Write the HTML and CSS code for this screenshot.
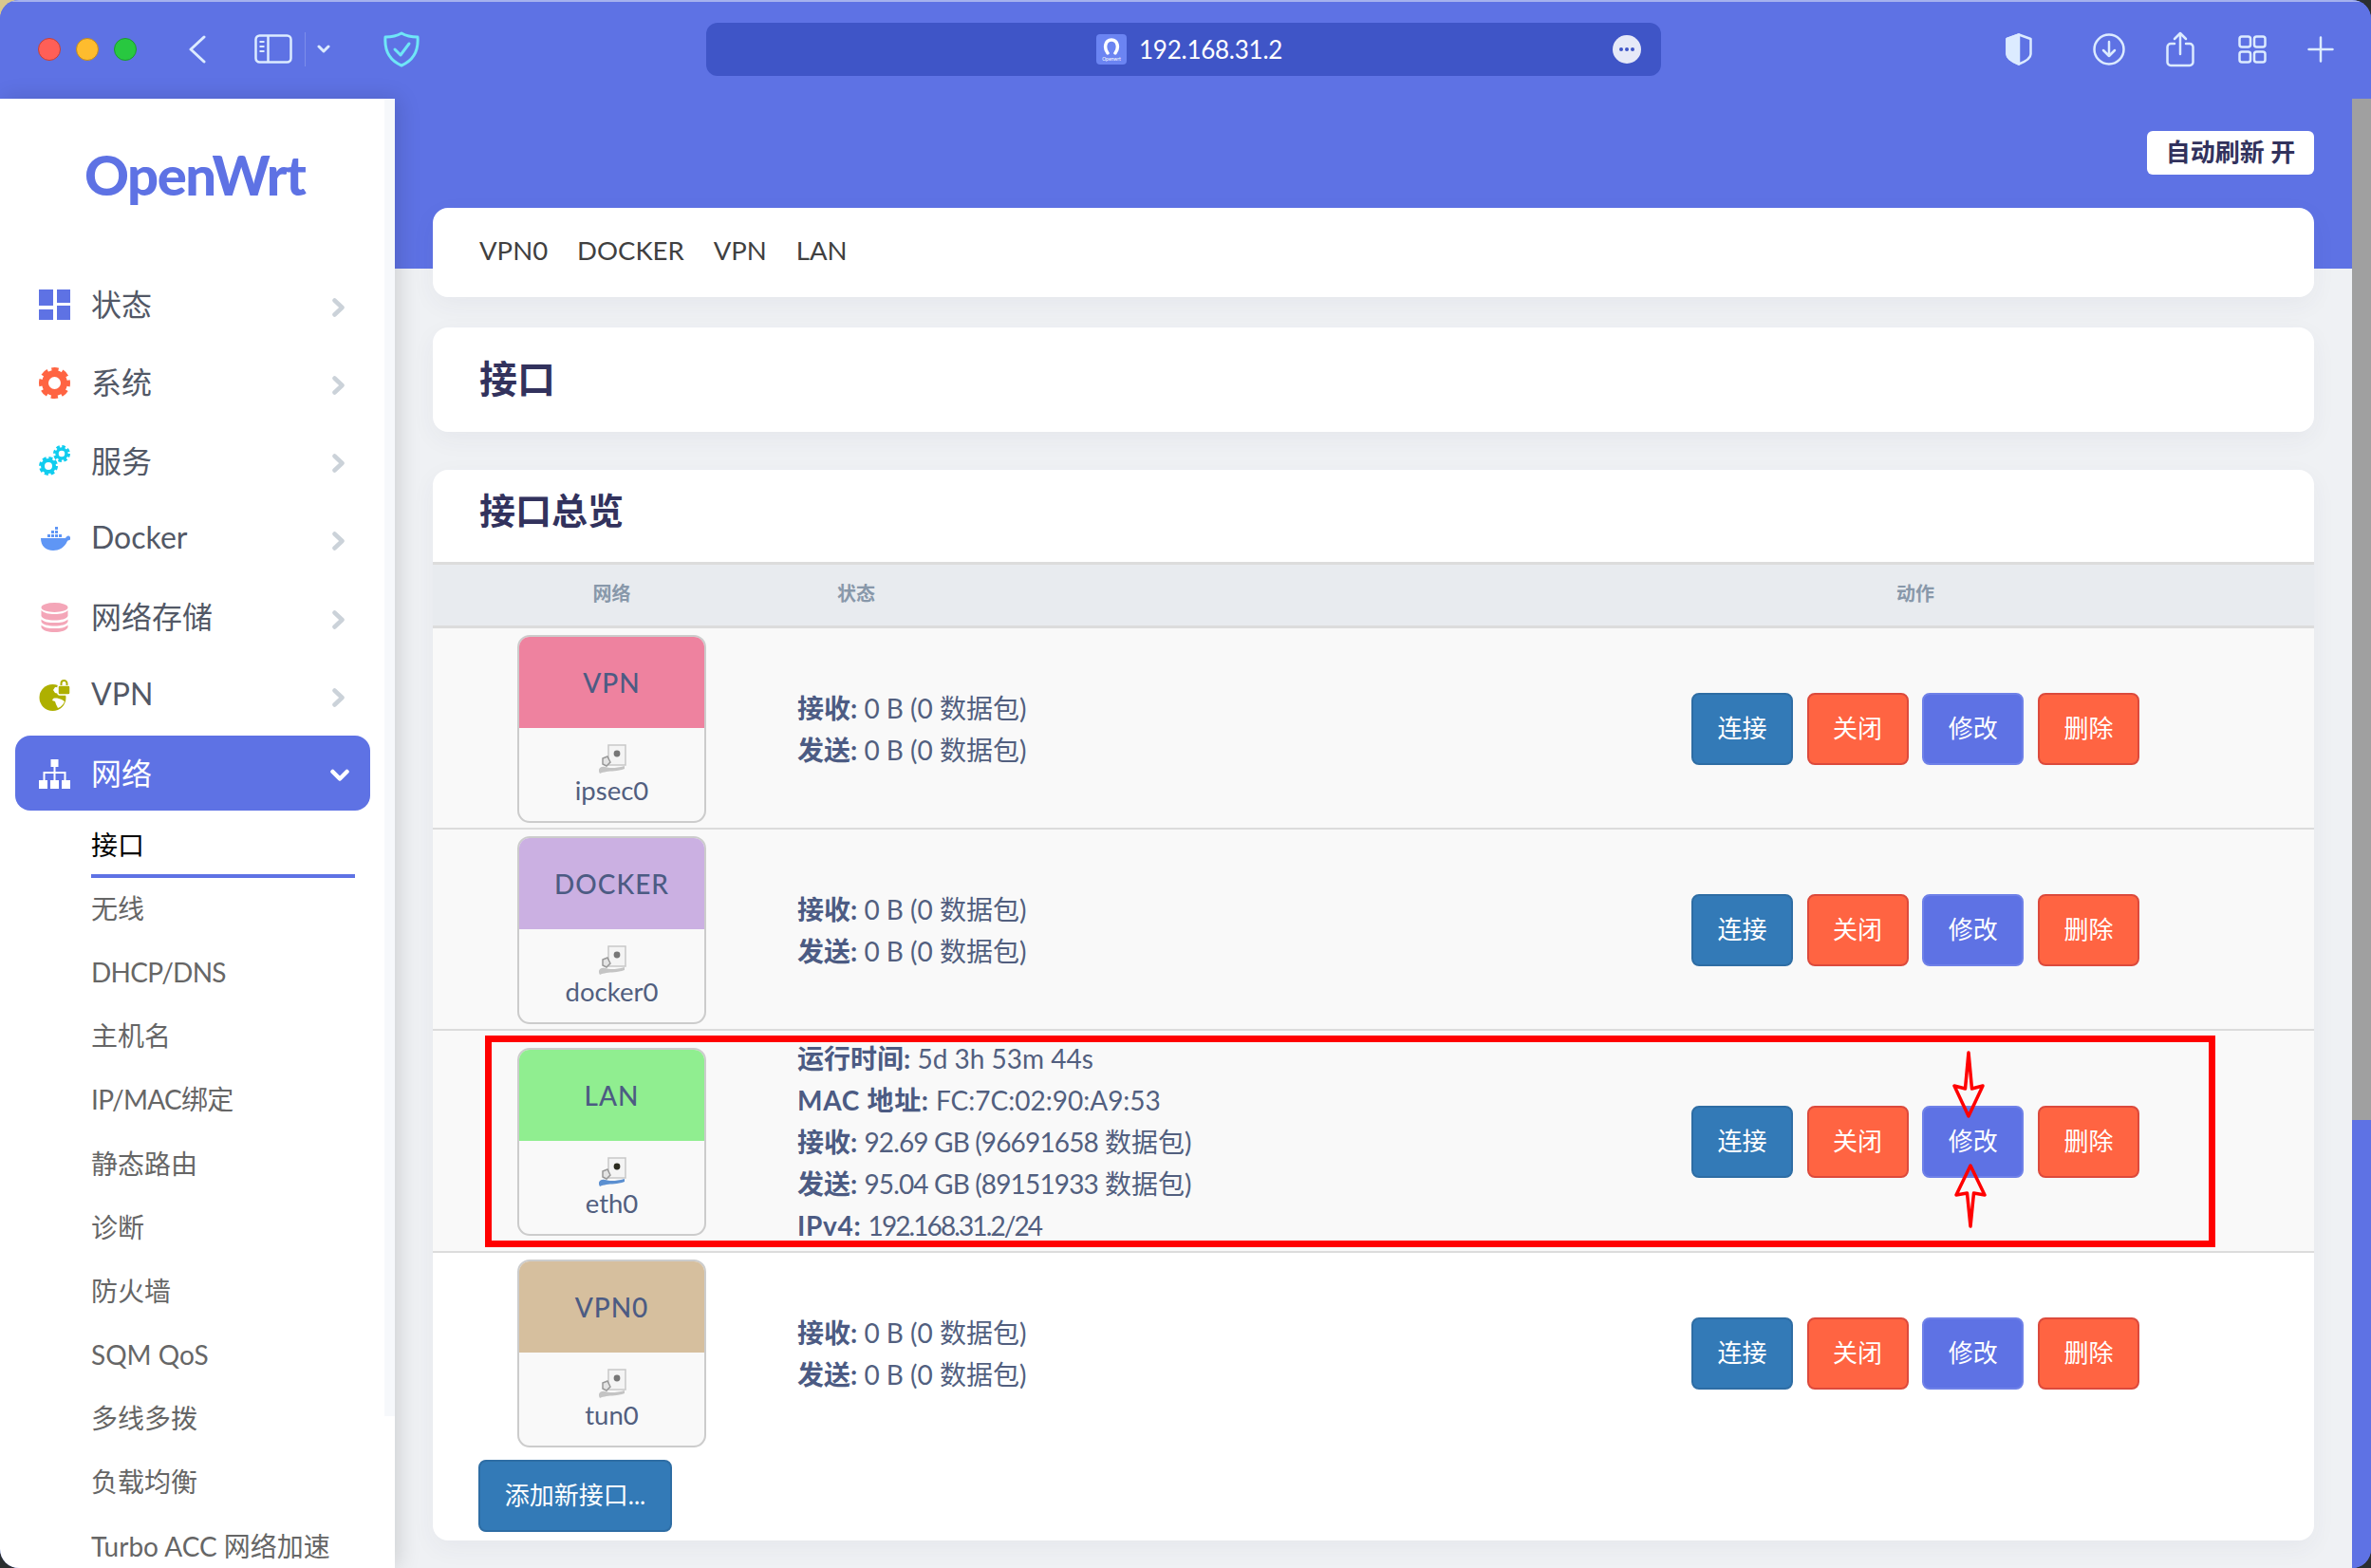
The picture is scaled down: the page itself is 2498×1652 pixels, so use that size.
FILE: index.html
```html
<!DOCTYPE html>
<html>
  <head>
    <title>接口 - OpenWrt</title>
    <link rel="stylesheet" href="styles.css">
  </head>
  <body>
    <svg class="defs" width="0" height="0">
      <symbol id="port" viewBox="0 0 32 32">
        <path d="M12 1h18v21H12z" fill="#f4f4f4" stroke="#c8c8c8" stroke-width="1.5" />
        <circle cx="21" cy="10" r="3.4" fill="currentColor" />
        <path d="M6 15l5-2 3 6-4 4-4-2z" fill="#e4e4e4" stroke="#999" stroke-width="1.5" />
        <path d="M3 31c-3-5 1-8 5-7 5 1 10 2 21-1v3c-8 3-14 2-19 3-3 .5-5 1-7 2z" fill="var(--cable)" />
      </symbol>
      <symbol id="chev" viewBox="0 0 14 20">
        <path d="M2.5 2.5 10.5 10l-8 7.500" fill="none" stroke="currentColor" stroke-width="4.500" stroke-linecap="round" stroke-linejoin="round" />
      </symbol>
    </svg>
    <div class="window">
      <header class="toolbar">
        <div class="lights">
          <span class="light red"></span>
          <span class="light yellow"></span>
          <span class="light green"></span>
        </div>
        <svg class="back" width="18" height="30" viewBox="0 0 18 30" fill="none" stroke="#dcebff" stroke-width="3" stroke-linecap="round" stroke-linejoin="round">
          <path d="M16 2 2 15l14 13" />
        </svg>
        <svg class="side" width="40" height="31" viewBox="0 0 40 31" fill="none" stroke="#dcebff" stroke-width="2.500">
          <rect x="1.500" y="1.500" width="37" height="28" rx="4" />
          <path d="M14.500 1.500v28" />
          <path d="M5.500 8h5M5.500 13h5M5.500 18h5" stroke-width="2" />
        </svg>
        <span class="tool-sep"></span>
        <svg class="side-more" width="14" height="9" viewBox="0 0 14 9" fill="none" stroke="#dcebff" stroke-width="3" stroke-linecap="round" stroke-linejoin="round">
          <path d="M2 2l5 5 5-5" />
        </svg>
        <svg class="guard" width="38" height="38" viewBox="0 0 38 38" fill="none" stroke="#6fe6f7" stroke-width="3" stroke-linecap="round" stroke-linejoin="round">
          <path d="M19 2c5 3 10 4 17 4 1 13-3 24-17 30C5 30 1 19 2 6c7 0 12-1 17-4z" />
          <path d="M12 19l6 6 9-12" />
        </svg>
        <div class="urlbar">
          <span class="favicon">
            <svg width="18" height="20" viewBox="0 0 18 20" fill="none" stroke="#fff" stroke-width="3.500" stroke-linecap="round">
              <path d="M5 17C1 12 2 3 9 3s8 9 4 14" />
            </svg>
            <span class="favicon-text">Openwrt</span>
          </span>
          <span class="url">192.168.31.2</span>
          <span class="url-more"><i></i><i></i><i></i></span>
        </div>
        <div class="tool-right">
          <svg width="28" height="34" viewBox="0 0 28 34" fill="none" stroke="#dcebff" stroke-width="2.500" stroke-linejoin="round">
            <path d="M14 1.500 26.500 6v16c0 4-6 8-12.500 10.500C7.500 30 1.500 26 1.500 22V6z" />
            <path d="M14 1.500V32.500C7.500 30 1.500 26 1.500 22V6z" fill="#dcebff" />
          </svg>
          <svg class="tool-dl" width="34" height="34" viewBox="0 0 34 34" fill="none" stroke="#dcebff" stroke-width="2.500" stroke-linecap="round" stroke-linejoin="round">
            <circle cx="17" cy="17" r="15.500" />
            <path d="M17 9v15M11 18l6 6 6-6" />
          </svg>
          <svg class="tool-share" width="30" height="38" viewBox="0 0 30 38" fill="none" stroke="#dcebff" stroke-width="2.500" stroke-linecap="round" stroke-linejoin="round">
            <path d="M9 13H5a3.500 3.500 0 0 0-3.500 3.500v16A3.500 3.500 0 0 0 5 36h20a3.500 3.500 0 0 0 3.500-3.500v-16A3.500 3.500 0 0 0 25 13h-4" />
            <path d="M15 24V2M9 8l6-6 6 6" />
          </svg>
          <svg width="30" height="30" viewBox="0 0 30 30" fill="none" stroke="#dcebff" stroke-width="2.500">
            <rect x="1.500" y="1.500" width="11.500" height="11" rx="2.500" />
            <rect x="17" y="1.500" width="11.500" height="11" rx="2.500" />
            <rect x="1.500" y="17.500" width="11.500" height="11" rx="2.500" />
            <rect x="17" y="17.500" width="11.500" height="11" rx="2.500" />
          </svg>
          <svg width="28" height="28" viewBox="0 0 28 28" fill="none" stroke="#dcebff" stroke-width="2.500" stroke-linecap="round">
            <path d="M14 1.500v25M1.500 14h25" />
          </svg>
        </div>
      </header>
      <div class="page">
        <aside class="sidebar">
          <div class="logo">OpenWrt</div>
          <ul class="nav">
            <li class="nav-item">
              <svg class="nav-icon" viewBox="0 0 33 33" fill="#5e72e4">
                <rect x="0" y="0" width="15" height="17" />
                <rect x="0" y="21" width="15" height="11" />
                <rect x="19" y="0" width="14" height="14" />
                <rect x="19" y="17" width="14" height="15" />
              </svg>
              <span class="nav-text">状态</span>
              <svg class="nav-chev"><use href="#chev" /></svg>
            </li>
            <li class="nav-item">
              <svg class="nav-icon" viewBox="0 0 33 33" fill="none" stroke="#ff6442">
                <circle cx="16.500" cy="16.500" r="10" stroke-width="7" />
                <circle cx="16.500" cy="16.500" r="14" stroke-width="5" stroke-dasharray="7 4" stroke-dashoffset="3.500" />
              </svg>
              <span class="nav-text">系统</span>
              <svg class="nav-chev"><use href="#chev" /></svg>
            </li>
            <li class="nav-item">
              <svg class="nav-icon" viewBox="0 0 33 33" fill="none" stroke="#11cdef">
                <circle cx="10" cy="22" r="6" stroke-width="4" />
                <circle cx="10" cy="22" r="8.500" stroke-width="3" stroke-dasharray="4 2.700" />
                <circle cx="24" cy="9" r="5" stroke-width="3.500" />
                <circle cx="24" cy="9" r="7.500" stroke-width="3" stroke-dasharray="3.500 2.400" />
              </svg>
              <span class="nav-text">服务</span>
              <svg class="nav-chev"><use href="#chev" /></svg>
            </li>
            <li class="nav-item">
              <svg class="nav-icon" viewBox="-2 0 33 33" fill="#5f96f5">
                <path d="M0 16h26c1-2 3-3 4-2l3 2c-2 2-4 2-5 3-3 7-9 10-15 10C5 29 0 24 0 16z" />
                <path d="M7 12h3v3H7zM11 12h3v3h-3zM15 12h3v3h-3zM19 12h3v3h-3zM11 8h3v3h-3zM15 8h3v3h-3zM15 4h3v3h-3z" />
              </svg>
              <span class="nav-text">Docker</span>
              <svg class="nav-chev"><use href="#chev" /></svg>
            </li>
            <li class="nav-item">
              <svg class="nav-icon" viewBox="0 0 33 33" fill="#f4a6b8">
                <ellipse cx="16.500" cy="6" rx="14" ry="5" />
                <path d="M2.500 9c3 3 8 4 14 4s11-1 14-4v6c-1 3-7 4.500-14 4.500S3.500 18 2.500 15z" />
                <path d="M2.500 18.500c3 3 8 3.500 14 3.500s11-.5 14-3.500V21c-1 3-7 4.500-14 4.500S3.500 24 2.500 21z" />
                <path d="M2.500 24.500c3 3 8 3.500 14 3.500s11-.5 14-3.500V27c-1 3-7 5-14 5S3.500 30 2.500 27z" />
              </svg>
              <span class="nav-text">网络存储</span>
              <svg class="nav-chev"><use href="#chev" /></svg>
            </li>
            <li class="nav-item">
              <svg class="nav-icon" viewBox="0 0 33 33" fill="#aeb000">
                <circle cx="14.500" cy="19" r="14" />
                <path d="M17 8c3 0 7 2 8 5l-4 2-4-1-2-3zM15 20c3-1 6 0 9 1l3 2c-1 3-4 6-7 7l-2-4-1-3-3-1z" fill="#fff" />
                <rect x="20" y="6" width="13" height="10" rx="2" stroke="#fff" stroke-width="1.500" />
                <path d="M23.500 6V4a3 3 0 0 1 6 0v2" fill="none" stroke="#aeb000" stroke-width="2" />
              </svg>
              <span class="nav-text">VPN</span>
              <svg class="nav-chev"><use href="#chev" /></svg>
            </li>
            <li class="nav-item active">
              <svg class="nav-icon" viewBox="0 0 33 33" fill="#fff">
                <rect x="12.500" y="2" width="8" height="8" />
                <rect x="0" y="24" width="9" height="9" />
                <rect x="12" y="24" width="9" height="9" />
                <rect x="24" y="24" width="9" height="9" />
                <path d="M15.500 10h2v5h11v9h-2v-7h-9v7h-2v-7h-9v7h-2v-9h11z" />
              </svg>
              <span class="nav-text">网络</span>
              <svg class="nav-chev open" width="20" height="14" viewBox="0 0 20 14" fill="none" stroke="#fff" stroke-width="4.500" stroke-linecap="round" stroke-linejoin="round">
                <path d="M2.500 3 10 10.500 17.500 3" />
              </svg>
            </li>
          </ul>
          <ul class="subnav">
            <li class="current">接口</li>
            <li>无线</li>
            <li class="latin">DHCP/DNS</li>
            <li>主机名</li>
            <li class="latin">IP/MAC绑定</li>
            <li>静态路由</li>
            <li>诊断</li>
            <li>防火墙</li>
            <li>SQM QoS</li>
            <li>多线多拨</li>
            <li>负载均衡</li>
            <li>Turbo ACC 网络加速</li>
          </ul>
        </aside>
        <main class="main">
          <div class="refresh-wrap">
            <button class="refresh">自动刷新 开</button>
          </div>
          <div class="card tabs">
            <span>VPN0</span>
            <span>DOCKER</span>
            <span>VPN</span>
            <span>LAN</span>
          </div>
          <div class="card page-title">接口</div>
          <section class="card overview">
            <h3 class="overview-title">接口总览</h3>
            <div class="table-head">
              <div class="col-net">网络</div>
              <div class="col-state">状态</div>
              <div class="col-act">动作</div>
            </div>

            <div class="row">
              <div class="iface">
                <div class="iface-name pink">VPN</div>
                <div class="iface-body">
                  <svg class="port" style="--cable:#c4c4c4"><use href="#port" color="#777" /></svg>
                  <span>ipsec0</span>
                </div>
              </div>
              <div class="state">
                <div><strong>接收:</strong> 0 B (0 数据包)</div>
                <div><strong>发送:</strong> 0 B (0 数据包)</div>
              </div>
              <div class="actions">
                <button class="btn blue">连接</button>
                <button class="btn orange">关闭</button>
                <button class="btn indigo">修改</button>
                <button class="btn orange">删除</button>
              </div>
            </div>

            <div class="row">
              <div class="iface">
                <div class="iface-name purple">DOCKER</div>
                <div class="iface-body">
                  <svg class="port" style="--cable:#c4c4c4"><use href="#port" color="#777" /></svg>
                  <span>docker0</span>
                </div>
              </div>
              <div class="state">
                <div><strong>接收:</strong> 0 B (0 数据包)</div>
                <div><strong>发送:</strong> 0 B (0 数据包)</div>
              </div>
              <div class="actions">
                <button class="btn blue">连接</button>
                <button class="btn orange">关闭</button>
                <button class="btn indigo">修改</button>
                <button class="btn orange">删除</button>
              </div>
            </div>

            <div class="row marked">
              <div class="iface">
                <div class="iface-name lime">LAN</div>
                <div class="iface-body">
                  <svg class="port" style="--cable:#5b8fd0"><use href="#port" color="#2c2c20" /></svg>
                  <span>eth0</span>
                </div>
              </div>
              <div class="state">
                <div><strong>运行时间:</strong> 5d 3h 53m 44s</div>
                <div><strong class="wide">MAC 地址:</strong> FC:7C:02:90:A9:53</div>
                <div><strong>接收:</strong> <span class="num">92.69 GB (96691658</span> 数据包)</div>
                <div><strong>发送:</strong> <span class="num">95.04 GB (89151933</span> 数据包)</div>
                <div><strong class="wide">IPv4:</strong> <span class="ip">192.168.31.2/24</span></div>
              </div>
              <div class="actions">
                <button class="btn blue">连接</button>
                <button class="btn orange">关闭</button>
                <button class="btn indigo">修改</button>
                <button class="btn orange">删除</button>
              </div>
              <div class="red-box"></div>
              <svg class="arrows" width="40" height="190" viewBox="0 0 40 190" fill="none" stroke="#f00" stroke-width="3.500" stroke-linejoin="round">
                <path d="M17 2 20.500 40 32 37 17 69 2 37 13.500 40z" />
                <path d="M19 121 34 152 22.500 150 19 185 15.500 150 4 152z" />
              </svg>
            </div>

            <div class="row last">
              <div class="iface">
                <div class="iface-name tan">VPN0</div>
                <div class="iface-body">
                  <svg class="port" style="--cable:#c4c4c4"><use href="#port" color="#777" /></svg>
                  <span>tun0</span>
                </div>
              </div>
              <div class="state">
                <div><strong>接收:</strong> 0 B (0 数据包)</div>
                <div><strong>发送:</strong> 0 B (0 数据包)</div>
              </div>
              <div class="actions">
                <button class="btn blue">连接</button>
                <button class="btn orange">关闭</button>
                <button class="btn indigo">修改</button>
                <button class="btn orange">删除</button>
              </div>
            </div>

            <div class="add-row">
              <button class="btn blue add">添加新接口...</button>
            </div>
          </section>
        </main>
        <div class="scrollbar"><div class="thumb"></div></div>
      </div>
    </div>
  </body>
</html>
```

FILE: styles.css
```css
* {
  box-sizing: border-box;
}
html,
body {
  margin: 0;
  height: 100%;
  overflow: hidden;
}
body {
  background: linear-gradient(135deg, #d9c88e 0 40px, #2b2f30 40px);
  font-family: Lato, "Noto Sans CJK SC", sans-serif;
  color: #525f7f;
}
.defs {
  position: absolute;
}
ul {
  list-style: none;
  margin: 0;
  padding: 0;
}
button {
  font-family: inherit;
}
.window {
  height: 100vh;
  display: flex;
  flex-direction: column;
  border-radius: 20px;
  overflow: hidden;
  background: #5e72e4;
}

/* browser toolbar */
.toolbar {
  height: 104px;
  flex: none;
  display: flex;
  align-items: center;
  padding: 0 39px 3px 40px;
  background: #5e72e4;
  border-top: 2px solid #a6b2ee;
}
.lights {
  display: flex;
  gap: 16px;
}
.light {
  width: 24px;
  height: 24px;
  border-radius: 50%;
}
.light.red {
  background: #ff5f57;
  border: 1px solid #c2403a;
}
.light.yellow {
  background: #febc2e;
  border: 1px solid #c08a1e;
}
.light.green {
  background: #28c840;
  border: 1px solid #1c9a2e;
}
.back {
  margin-left: 55px;
}
.side {
  margin-left: 51px;
}
.tool-sep {
  width: 1px;
  height: 36px;
  margin-left: 13px;
  background: #7d8eea;
}
.side-more {
  margin-left: 12px;
}
.guard {
  margin-left: 56px;
}
.urlbar {
  width: 1006px;
  height: 56px;
  margin-left: 302px;
  display: flex;
  align-items: center;
  border-radius: 12px;
  background: #3f55c7;
  padding: 0 21px 0 411px;
}
.favicon {
  width: 32px;
  height: 32px;
  flex: none;
  display: flex;
  flex-direction: column;
  align-items: center;
  padding-top: 3px;
  border-radius: 4px;
  background: #6b84f2;
}
.favicon-text {
  font-size: 5px;
  line-height: 6px;
  color: #fff;
}
.url {
  margin-left: 13px;
  font-size: 26px;
  letter-spacing: -0.25px;
  color: #fff;
}
.url-more {
  width: 30px;
  height: 30px;
  margin-left: auto;
  display: flex;
  align-items: center;
  justify-content: center;
  gap: 2px;
  border-radius: 50%;
  background: #e6e9f8;
}
.url-more i {
  width: 4px;
  height: 4px;
  border-radius: 50%;
  background: #3f55c7;
}
.tool-right {
  margin-left: auto;
  display: flex;
  align-items: center;
  gap: 43px;
}
.tool-dl {
  margin-left: 21px;
}
.tool-share {
  margin-right: 3px;
}

/* page */
.page {
  flex: 1;
  min-height: 0;
  display: flex;
}
.sidebar {
  width: 416px;
  flex: none;
  position: relative;
  z-index: 2;
  background: linear-gradient(90deg, #fff 405px, #f6f8fb 405px) no-repeat #fff;
  background-size: 100% 1388px;
  box-shadow: 4px 0 22px rgba(0, 0, 0, 0.14);
}
.logo {
  height: 177.5px;
  padding: 48px 0 0 89px;
  font-size: 58px;
  line-height: 64px;
  font-weight: 900;
  letter-spacing: -1.5px;
  color: #5e72e4;
}
.nav-item {
  height: 79px;
  margin: 0 26px 3.3px 16px;
  padding: 0 26px 0 25px;
  display: flex;
  align-items: center;
  border-radius: 16px;
  color: #525866;
}
.nav-icon {
  width: 33px;
  height: 33px;
  flex: none;
}
.nav-text {
  margin-left: 22px;
  padding-bottom: 4px;
  font-size: 32px;
}
.nav-chev {
  width: 14px;
  height: 20px;
  margin-left: auto;
  margin-top: 5px;
  color: #cbd2d9;
}
.nav-chev.open {
  width: 20px;
  height: 14px;
  margin-right: -4px;
}
.nav-item.active {
  background: #5e72e4;
  color: #fff;
}
.subnav {
  margin: 0 42px 0 96px;
  font-size: 28px;
  color: #666;
}
.subnav li {
  height: 67.2px;
  line-height: 65px;
  white-space: nowrap;
}
.subnav .latin {
  letter-spacing: -0.7px;
}
.subnav .current {
  color: #000;
  box-shadow: inset 0 -4px 0 #5e72e4;
}

/* main column */
.main {
  flex: 1;
  min-width: 0;
  padding: 34px 40px 0;
  background: linear-gradient(#5e72e4 179px, #eff1f4 179px);
}
.refresh-wrap {
  display: flex;
  justify-content: flex-end;
  margin-bottom: 35px;
}
.refresh {
  width: 176px;
  height: 46px;
  padding: 0 0 5px;
  border: none;
  border-radius: 6px;
  background: #fff;
  color: #32325d;
  font-size: 26px;
  font-weight: 600;
}
.scrollbar {
  width: 20px;
  flex: none;
  background: #5e72e4;
}
.thumb {
  height: 1076px;
  background: #a0a0a0;
}
.card {
  background: #fff;
  border-radius: 16px;
  box-shadow: 0 8px 26px rgba(50, 50, 93, 0.05);
}
.tabs {
  height: 94px;
  display: flex;
  align-items: center;
  gap: 31px;
  padding: 0 0 6px 49px;
  margin-bottom: 32px;
  font-size: 27.5px;
  color: #404040;
}
.page-title {
  height: 110px;
  display: flex;
  align-items: center;
  padding: 0 0 7px 49px;
  margin-bottom: 40px;
  font-size: 40px;
  font-weight: 700;
  color: #32325d;
}
.overview {
  height: 1128px;
  overflow: hidden;
}
.overview-title {
  height: 97px;
  margin: 0;
  padding-left: 49px;
  line-height: 84px;
  font-size: 38px;
  font-weight: 700;
  color: #32325d;
}
.table-head {
  height: 70px;
  display: flex;
  align-items: center;
  padding: 0 184px 6px 89px;
  background: #e8ebef;
  border-top: 3px solid #dcdcdc;
  border-bottom: 3px solid #dcdcdc;
  font-size: 20px;
  font-weight: 600;
  color: #8898aa;
}
.col-net {
  width: 199px;
  text-align: center;
}
.col-state {
  flex: 1;
  padding-left: 138px;
}
.col-act {
  width: 472px;
  text-align: center;
}
.row {
  position: relative;
  display: flex;
  align-items: center;
  padding: 7px 184px 5px 89px;
  background: #f9f9f9;
  border-bottom: 2px solid #dcdcdc;
}
.row.last {
  background: #fff;
  border-bottom: none;
}
.iface {
  width: 199px;
  height: 198px;
  flex: none;
  overflow: hidden;
  border: 2.5px solid #ccc;
  border-radius: 13px;
  background: #f9f9f9;
}
.iface-name {
  height: 96px;
  line-height: 96px;
  text-align: center;
  font-size: 28px;
  font-weight: 500;
  letter-spacing: 1px;
  color: #4c5b83;
}
.pink {
  background: #ee829f;
}
.purple {
  background: #cbb0e2;
}
.lime {
  background: #90ee90;
}
.tan {
  background: #d6bf9e;
}
.iface-body {
  display: flex;
  flex-direction: column;
  align-items: center;
  padding-top: 17px;
  font-size: 27.5px;
  line-height: 34px;
}
.port {
  width: 32px;
  height: 32px;
}
.state {
  flex: 1;
  margin-left: 96px;
  font-size: 28px;
  line-height: 44px;
  white-space: nowrap;
}
.state strong {
  font-weight: 700;
  color: #4c5b83;
}
.state .wide {
  letter-spacing: 0.7px;
}
.state .num {
  letter-spacing: -0.85px;
}
.state .ip {
  letter-spacing: -1.9px;
}
.actions {
  display: flex;
  gap: 14.7px;
}
.btn {
  width: 107px;
  height: 76px;
  padding: 0 0 5px;
  border-radius: 8px;
  border: 2px solid;
  color: #fff;
  font-size: 26px;
}
.btn.blue {
  background: #337ab7;
  border-color: #2e6da4;
}
.btn.orange {
  background: #ff6442;
  border-color: #dc4a3c;
}
.btn.indigo {
  background: #5e72e4;
  border-color: #6f81e8;
}
.add-row {
  padding: 8px 0 0 48px;
}
.btn.add {
  width: 204px;
  height: 76px;
}

/* annotations drawn over the LAN row */
.red-box {
  position: absolute;
  left: 55px;
  top: 5px;
  width: 1823px;
  height: 223px;
  border: 7px solid #f00;
}
.arrows {
  position: absolute;
  left: 1601px;
  top: 21px;
}
```
